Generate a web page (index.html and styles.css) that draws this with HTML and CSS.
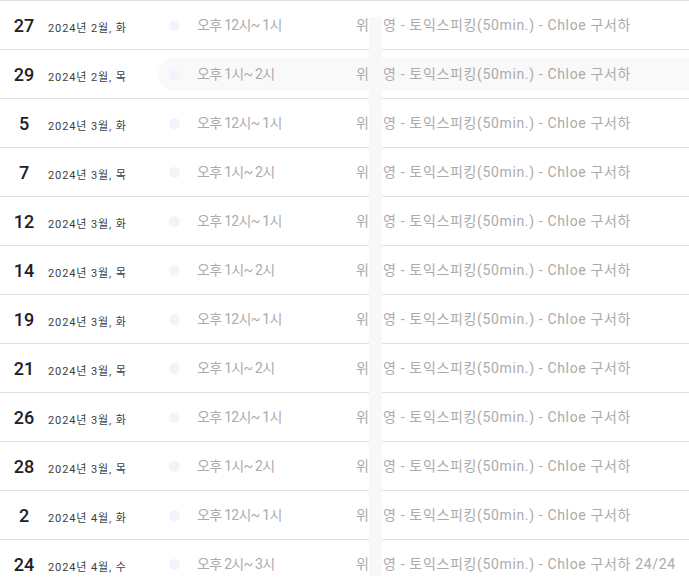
FILE: index.html
```html
<!DOCTYPE html>
<html lang="ko">
<head>
<meta charset="utf-8">
<link rel="stylesheet" href="styles.css">
</head>
<body>
<div class="list">
  <div class="row"><div class="day">27</div><div class="date">2024년 2월, 화</div><div class="event"><span class="dot"></span><span class="time">오후 12시~ 1시</span><span class="title">위원영 - 토익스피킹(50min.) - Chloe 구서하</span></div></div>
  <div class="row"><div class="day">29</div><div class="date">2024년 2월, 목</div><div class="event hover"><span class="dot"></span><span class="time">오후 1시~ 2시</span><span class="title">위원영 - 토익스피킹(50min.) - Chloe 구서하</span></div></div>
  <div class="row"><div class="day">5</div><div class="date">2024년 3월, 화</div><div class="event"><span class="dot"></span><span class="time">오후 12시~ 1시</span><span class="title">위원영 - 토익스피킹(50min.) - Chloe 구서하</span></div></div>
  <div class="row"><div class="day">7</div><div class="date">2024년 3월, 목</div><div class="event"><span class="dot"></span><span class="time">오후 1시~ 2시</span><span class="title">위원영 - 토익스피킹(50min.) - Chloe 구서하</span></div></div>
  <div class="row"><div class="day">12</div><div class="date">2024년 3월, 화</div><div class="event"><span class="dot"></span><span class="time">오후 12시~ 1시</span><span class="title">위원영 - 토익스피킹(50min.) - Chloe 구서하</span></div></div>
  <div class="row"><div class="day">14</div><div class="date">2024년 3월, 목</div><div class="event"><span class="dot"></span><span class="time">오후 1시~ 2시</span><span class="title">위원영 - 토익스피킹(50min.) - Chloe 구서하</span></div></div>
  <div class="row"><div class="day">19</div><div class="date">2024년 3월, 화</div><div class="event"><span class="dot"></span><span class="time">오후 12시~ 1시</span><span class="title">위원영 - 토익스피킹(50min.) - Chloe 구서하</span></div></div>
  <div class="row"><div class="day">21</div><div class="date">2024년 3월, 목</div><div class="event"><span class="dot"></span><span class="time">오후 1시~ 2시</span><span class="title">위원영 - 토익스피킹(50min.) - Chloe 구서하</span></div></div>
  <div class="row"><div class="day">26</div><div class="date">2024년 3월, 화</div><div class="event"><span class="dot"></span><span class="time">오후 12시~ 1시</span><span class="title">위원영 - 토익스피킹(50min.) - Chloe 구서하</span></div></div>
  <div class="row"><div class="day">28</div><div class="date">2024년 3월, 목</div><div class="event"><span class="dot"></span><span class="time">오후 1시~ 2시</span><span class="title">위원영 - 토익스피킹(50min.) - Chloe 구서하</span></div></div>
  <div class="row"><div class="day">2</div><div class="date">2024년 4월, 화</div><div class="event"><span class="dot"></span><span class="time">오후 12시~ 1시</span><span class="title">위원영 - 토익스피킹(50min.) - Chloe 구서하</span></div></div>
  <div class="row"><div class="day">24</div><div class="date">2024년 4월, 수</div><div class="event"><span class="dot"></span><span class="time">오후 2시~ 3시</span><span class="title">위원영 - 토익스피킹(50min.) - Chloe 구서하 24/24</span></div></div>
  <div class="strip"></div>
</div>
</body>
</html>
```

FILE: styles.css
```css
html, body {
  margin: 0;
  padding: 0;
  background: #ffffff;
  overflow: hidden;
}
body {
  font-family: Roboto, "Noto Sans CJK KR", sans-serif;
  width: 689px;
  height: 583px;
}
.list {
  position: relative;
}
.row {
  display: flex;
  align-items: center;
  height: 48px;
  border-top: 1px solid #dde1e6;
}
.day {
  width: 48px;
  flex: 0 0 48px;
  text-align: center;
  font-size: 18px;
  font-weight: 500;
  color: #202124;
  line-height: 20px;
  padding-top: 1px;
}
.date {
  width: 110px;
  flex: 0 0 110px;
  font-size: 11px;
  font-weight: 400;
  color: #3c4043;
  line-height: 14px;
  padding-top: 8px;
  letter-spacing: 0.9px;
}
.event {
  flex: 1;
  display: flex;
  align-items: center;
  height: 33px;
  border-radius: 17px 0 0 17px;
  font-size: 14px;
  color: #ababab;
  line-height: 18px;
}
.event.hover {
  background: #f9f9f9;
}
.dot {
  width: 11px;
  height: 11px;
  border-radius: 50%;
  background: #f4f2fd;
  margin-left: 11px;
  margin-right: 17px;
  flex: 0 0 11px;
}
.time {
  width: 159px;
  flex: 0 0 159px;
  letter-spacing: -0.7px;
}
.title {
  white-space: nowrap;
  letter-spacing: 0.65px;
}
.strip {
  position: absolute;
  left: 369px;
  top: 17px;
  width: 13px;
  height: 559px;
  background: #f8f8f8;
}
```
